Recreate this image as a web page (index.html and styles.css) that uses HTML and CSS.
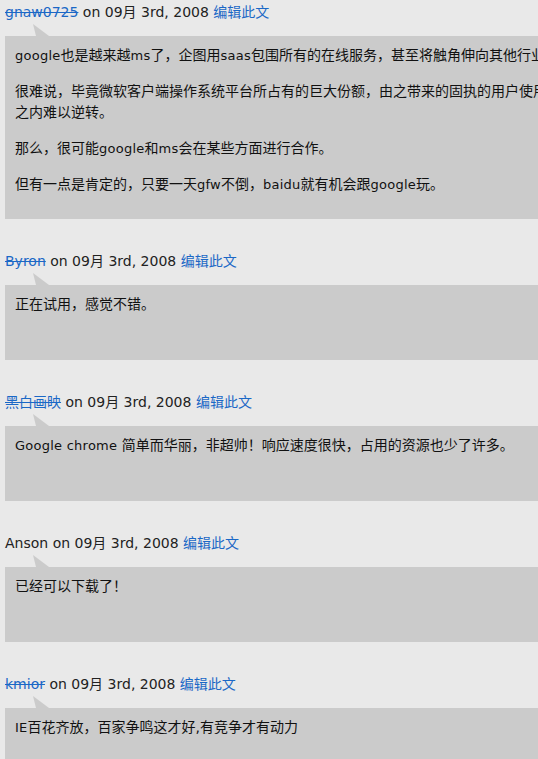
FILE: index.html
```html
<!DOCTYPE html>
<html lang="zh-CN">
<head>
<meta charset="utf-8">
<title>Comments</title>
<link rel="stylesheet" href="styles.css">
</head>
<body>
<div class="comments">
  <div class="comment">
    <div class="meta"><a class="author" href="#">gnaw0725</a> on 09月 3rd, 2008 <a class="edit" href="#">编辑此文</a></div>
    <div class="bubble">
      <p><span class="en">google</span>也是越来越<span class="en">ms</span>了，企图用<span class="en">saas</span>包围所有的在线服务，甚至将触角伸向其他行业。</p>
      <p>很难说，毕竟微软客户端操作系统平台所占有的巨大份额，由之带来的固执的用户使用习惯，短时间之内难以逆转。</p>
      <p>那么，很可能<span class="en">google</span>和<span class="en">ms</span>会在某些方面进行合作。</p>
      <p>但有一点是肯定的，只要一天<span class="en">gfw</span>不倒，<span class="en">baidu</span>就有机会跟<span class="en">google</span>玩。</p>
    </div>
  </div>
  <div class="comment">
    <div class="meta"><a class="author" href="#">Byron</a> on 09月 3rd, 2008 <a class="edit" href="#">编辑此文</a></div>
    <div class="bubble">
      <p>正在试用，感觉不错。</p>
    </div>
  </div>
  <div class="comment">
    <div class="meta"><a class="author" href="#">黑白画映</a> on 09月 3rd, 2008 <a class="edit" href="#">编辑此文</a></div>
    <div class="bubble">
      <p><span class="en">Google chrome </span>简单而华丽，非超帅！响应速度很快，占用的资源也少了许多。</p>
    </div>
  </div>
  <div class="comment">
    <div class="meta">Anson on 09月 3rd, 2008 <a class="edit" href="#">编辑此文</a></div>
    <div class="bubble">
      <p>已经可以下载了！</p>
    </div>
  </div>
  <div class="comment">
    <div class="meta"><a class="author" href="#">kmior</a> on 09月 3rd, 2008 <a class="edit" href="#">编辑此文</a></div>
    <div class="bubble">
      <p><span class="en">IE</span>百花齐放，百家争鸣这才好,有竞争才有动力</p>
    </div>
  </div>
</div>
</body>
</html>
```
FILE: styles.css
```css
html, body {
  margin: 0;
  padding: 0;
  overflow: hidden;
  background: #e9e9e9;
}

body {
  font-family: "DejaVu Sans", "Noto Sans CJK SC", sans-serif;
  color: #1a1a1a;
}

.comments {
  padding: 2px 0 0 5px;
}

.comment + .comment {
  margin-top: 32px;
}

.meta {
  font-size: 14px;
  line-height: 20px;
  margin-bottom: 14px;
  white-space: nowrap;
  color: #222;
}

.meta a {
  color: #1b68c6;
  text-decoration: none;
}

.meta .author {
  text-decoration: line-through;
}

.bubble {
  position: relative;
  background: #cbcbcb;
  width: 616px;
  min-height: 57px;
  padding: 9px 10px;
}

.bubble::before {
  content: "";
  position: absolute;
  left: 28px;
  top: -12px;
  width: 16px;
  height: 12px;
  background: #cbcbcb;
  clip-path: polygon(0 0, 3px 100%, 100% 100%);
}

.bubble p {
  margin: 0 0 15px;
  font-size: 14px;
  line-height: 21px;
  color: #111;
}

.en {
  font-size: 13px;
  letter-spacing: 0.25px;
  line-height: 1;
}
```
